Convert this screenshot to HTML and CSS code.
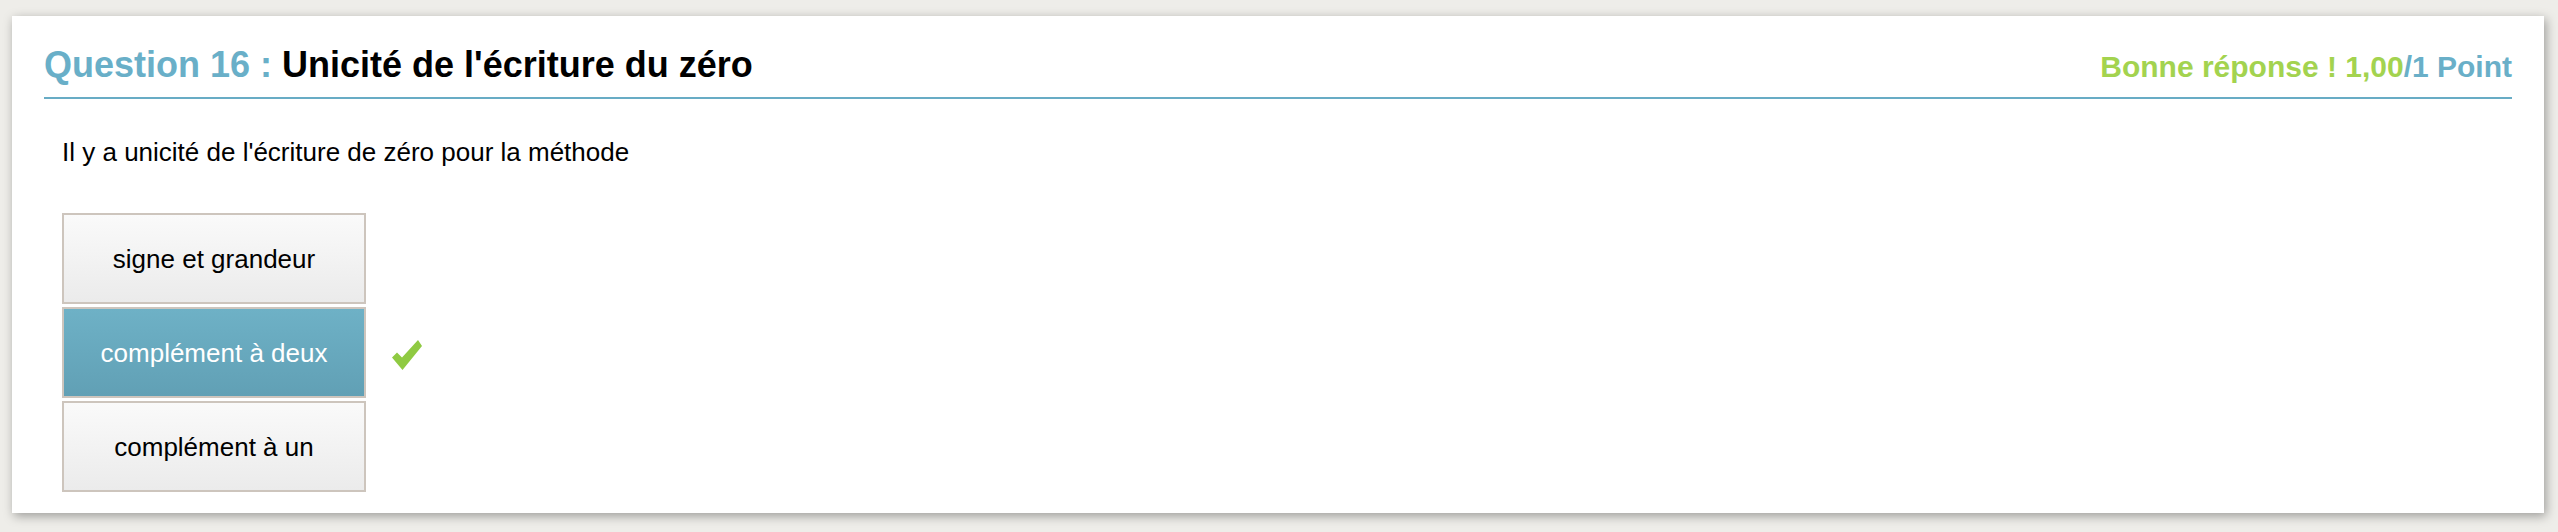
FILE: index.html
```html
<!DOCTYPE html>
<html lang="fr">
<head>
<meta charset="utf-8">
<title>Question 16</title>
<link rel="stylesheet" href="styles.css">
</head>
<body>
<div class="card">
  <div class="head">
    <h2 class="title"><span class="qnum">Question 16 :</span> Unicité de l'écriture du zéro</h2>
    <div class="score"><span class="good">Bonne réponse ! 1,00</span><span class="pts">/1 Point</span></div>
  </div>
  <div class="content">
    <p class="question">Il y a unicité de l'écriture de zéro pour la méthode</p>
    <div class="answers">
      <div class="row"><div class="answer">signe et grandeur</div></div>
      <div class="row"><div class="answer selected">complément à deux</div>
        <svg class="check" width="30" height="30" viewBox="0 0 30 30"><path d="M0 17.5 L5 12.5 L10 17.5 L26 0 L30 6 L10.5 30 Z" fill="#8fca42"/></svg>
      </div>
      <div class="row"><div class="answer">complément à un</div></div>
    </div>
  </div>
</div>
</body>
</html>
```
FILE: styles.css
```css
html, body {
  margin: 0;
}
body {
  background: #eeede9;
  padding: 16px 14px 19px 12px;
  font-family: "Liberation Sans", Arial, sans-serif;
  color: #000;
}
.card {
  background: #fff;
  padding: 29px 32px 21px 32px;
  box-shadow: 2px 3px 10px rgba(0, 0, 0, 0.35);
}
.head {
  display: flex;
  justify-content: space-between;
  align-items: baseline;
  border-bottom: 2px solid #68acc5;
  padding-bottom: 10px;
  line-height: 40px;
}
.title {
  margin: 0;
  font-size: 36px;
  font-weight: bold;
}
.qnum {
  color: #69afc8;
}
.score {
  font-size: 30px;
  font-weight: bold;
}
.good {
  color: #a3d34f;
}
.pts {
  color: #69afc8;
}
.content {
  padding-left: 18px;
}
.question {
  margin: 38px 0 0 0;
  font-size: 26px;
  line-height: 30px;
}
.answers {
  margin-top: 46px;
  display: flex;
  flex-direction: column;
  gap: 3px;
}
.row {
  display: flex;
  align-items: center;
  gap: 26px;
}
.answer {
  width: 300px;
  height: 87px;
  border: 2px solid #cdc5bd;
  background: linear-gradient(to bottom, #fafafa, #ebebeb);
  display: flex;
  align-items: center;
  justify-content: center;
  font-size: 26px;
  line-height: 30px;
}
.answer.selected {
  background: linear-gradient(to bottom, #6eb1c6, #61a0b5);
  color: #fff;
}
.check {
  margin-top: 4px;
  filter: blur(0.6px);
}
```
